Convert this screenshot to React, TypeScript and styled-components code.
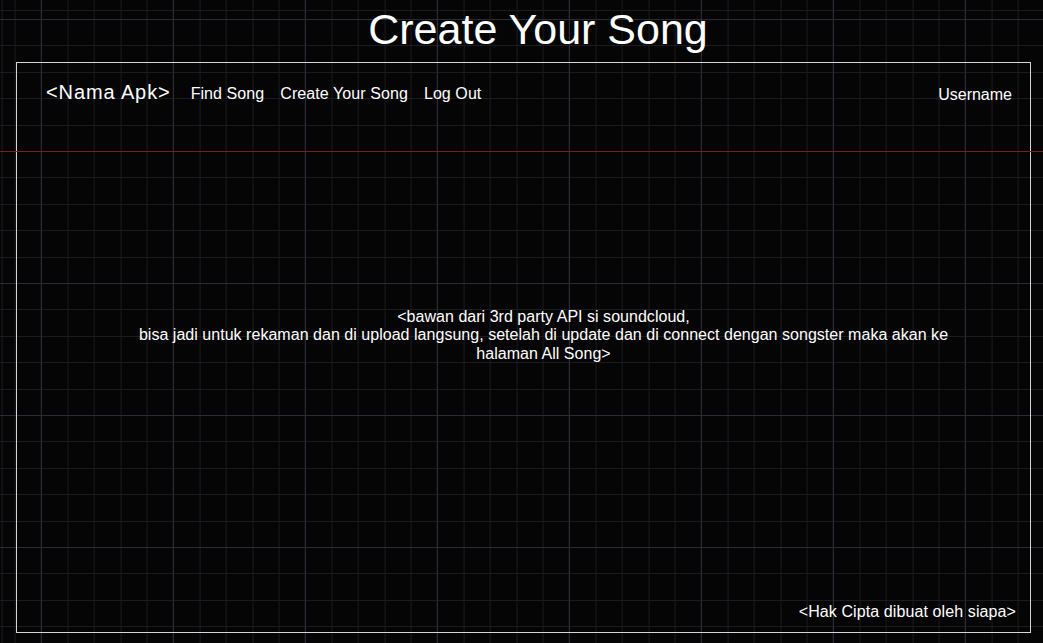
import React from "react";
import styled, { createGlobalStyle } from "styled-components";

const GlobalStyle = createGlobalStyle`
  html, body {
    margin: 0;
    padding: 0;
    background-color: #050505;
  }
  body {
    position: relative;
    min-height: 643px;
    font-family: "Liberation Sans", Arial, sans-serif;
    color: #ffffff;
    background-color: #050505;
    background-image:
      repeating-linear-gradient(to right, transparent 0 41px, #2c2c34 41px 42px, transparent 42px 132px),
      repeating-linear-gradient(to bottom, transparent 0 19px, #2c2c34 19px 20px, transparent 20px 132px),
      repeating-linear-gradient(to right, #1b1b21 0 1px, transparent 1px 26.4px),
      repeating-linear-gradient(to bottom, #1b1b21 0 1px, transparent 1px 26.4px);
    background-position: 0 0, 0 0, 14.6px 0, 0 19px;
    background-repeat: repeat;
  }
  body::after {
    content: "";
    position: absolute;
    left: 0;
    right: 0;
    top: 151px;
    height: 1px;
    background-color: rgb(120, 30, 36);
    pointer-events: none;
  }
`;

const Page = styled.div`
  height: 643px;
  display: flex;
  flex-direction: column;
  box-sizing: border-box;
`;

const Title = styled.h1`
  margin: 0;
  padding: 5px 0 0 33px;
  height: 62px;
  box-sizing: border-box;
  font-size: 43px;
  line-height: 48px;
  font-weight: 400;
  text-align: center;
  color: #ffffff;
`;

const Frame = styled.section`
  margin-left: 16px;
  width: 1015px;
  height: 571px;
  box-sizing: border-box;
  border: 1px solid #d6d6d6;
  display: flex;
  flex-direction: column;
`;

const Nav = styled.nav`
  display: flex;
  justify-content: space-between;
  align-items: flex-start;
  padding: 17px 18px 0 29px;
`;

const NavLeft = styled.div`
  display: flex;
  align-items: baseline;
  gap: 20px;
`;

const Brand = styled.span`
  font-size: 20px;
  line-height: 24px;
  letter-spacing: 0.9px;
  color: #ffffff;
`;

const Links = styled.div`
  display: flex;
  align-items: baseline;
  gap: 16px;
`;

const NavLink = styled.a`
  font-size: 16px;
  line-height: 18px;
  letter-spacing: 0.08px;
  color: #ffffff;
  text-decoration: none;
  cursor: pointer;
`;

const User = styled.span`
  margin-top: 6px;
  font-size: 16px;
  line-height: 18px;
  color: #ffffff;
`;

const Main = styled.main`
  flex: 1;
  padding: 204px 0 0 40px;
  text-align: center;
  font-size: 16px;
  line-height: 18.4px;
  letter-spacing: 0.03px;
  color: #ffffff;
`;

const Line = styled.div``;

const Footer = styled.footer`
  display: flex;
  justify-content: flex-end;
  padding: 0 14px 11px 0;
  font-size: 16px;
  line-height: 18px;
  letter-spacing: 0.1px;
  color: #ffffff;
`;

export default function App() {
  return (
    <>
      <GlobalStyle />
      <Page>
        <Title>Create Your Song</Title>
        <Frame>
          <Nav>
            <NavLeft>
              <Brand>&lt;Nama Apk&gt;</Brand>
              <Links>
                <NavLink>Find Song</NavLink>
                <NavLink>Create Your Song</NavLink>
                <NavLink>Log Out</NavLink>
              </Links>
            </NavLeft>
            <User>Username</User>
          </Nav>
          <Main>
            <Line>&lt;bawan dari 3rd party API si soundcloud,</Line>
            <Line>
              bisa jadi untuk rekaman dan di upload langsung, setelah di update dan di connect dengan songster maka akan ke
            </Line>
            <Line>halaman All Song&gt;</Line>
          </Main>
          <Footer>&lt;Hak Cipta dibuat oleh siapa&gt;</Footer>
        </Frame>
      </Page>
    </>
  );
}
